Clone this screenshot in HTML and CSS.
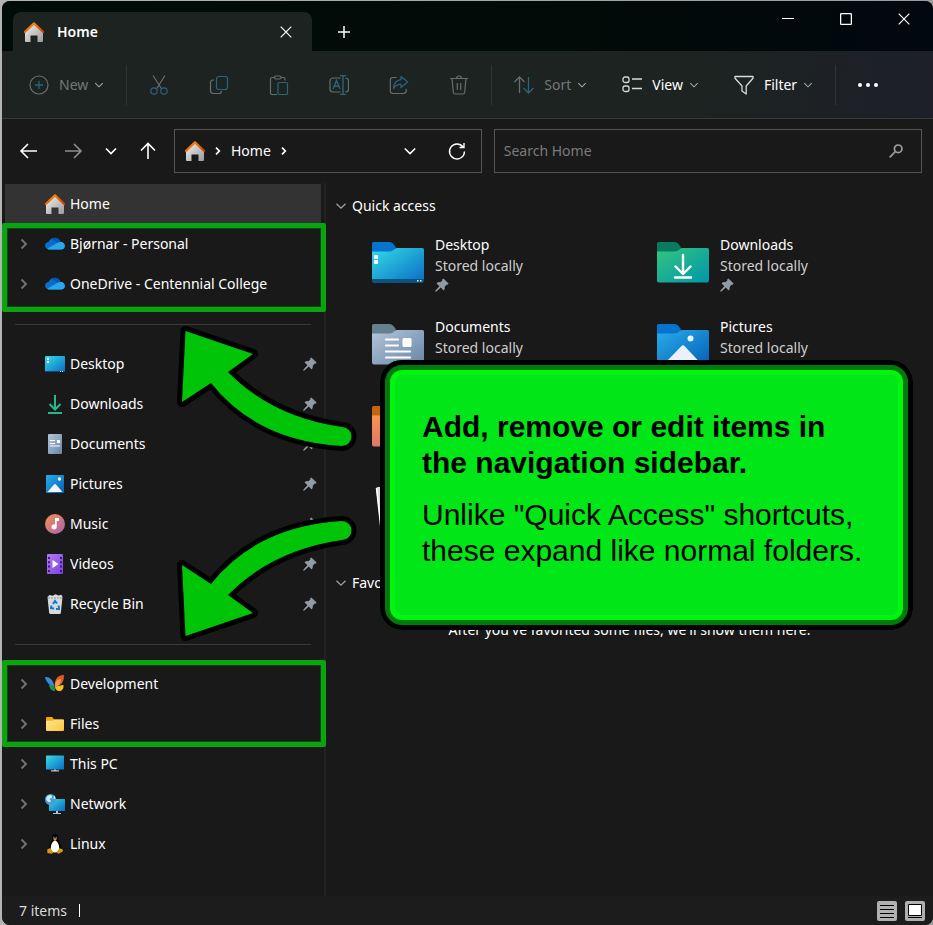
FILE: index.html
```html
<!DOCTYPE html>
<html lang="en">
<head>
<meta charset="utf-8">
<meta name="viewport" content="width=device-width, initial-scale=1">
<title>Home</title>
<link rel="stylesheet" href="styles.css">
</head>
<body>
<svg class="sprite" aria-hidden="true">
  <defs>
    <linearGradient id="g-roof" x1="0" y1="0" x2="1" y2="1"><stop offset="0" stop-color="#fb9a10"/><stop offset="1" stop-color="#d83b01"/></linearGradient>
    <linearGradient id="g-wall" x1="0" y1="0" x2="1" y2="1"><stop offset="0" stop-color="#f2f2f2"/><stop offset="1" stop-color="#9a9a9a"/></linearGradient>
    <linearGradient id="g-cyan" x1="0" y1="0" x2="1" y2="1"><stop offset="0" stop-color="#35dbe6"/><stop offset="1" stop-color="#0a6cc4"/></linearGradient>
    <linearGradient id="g-blue" x1="0" y1="0" x2="1" y2="1"><stop offset="0" stop-color="#28aeea"/><stop offset="1" stop-color="#0560b6"/></linearGradient>
    <linearGradient id="g-green" x1="0" y1="0" x2="1" y2="1"><stop offset="0" stop-color="#33c481"/><stop offset="1" stop-color="#0097a8"/></linearGradient>
    <linearGradient id="g-slate" x1="0" y1="0" x2="1" y2="1"><stop offset="0" stop-color="#b4c5da"/><stop offset="1" stop-color="#6786a8"/></linearGradient>
    <linearGradient id="g-music" x1="0" y1="0" x2="1" y2="1"><stop offset="0" stop-color="#f5924f"/><stop offset="1" stop-color="#a95fb0"/></linearGradient>
    <linearGradient id="g-orange" x1="0" y1="0" x2="0" y2="1"><stop offset="0" stop-color="#fd9650"/><stop offset="1" stop-color="#dd7866"/></linearGradient>
    <linearGradient id="g-video" x1="0" y1="0" x2="1" y2="1"><stop offset="0" stop-color="#b37cf0"/><stop offset="1" stop-color="#7a3fe0"/></linearGradient>
    <linearGradient id="g-yellow" x1="0" y1="0" x2="1" y2="1"><stop offset="0" stop-color="#ffe69a"/><stop offset="1" stop-color="#fdc534"/></linearGradient>
  </defs>
  <symbol id="i-home" viewBox="0 0 20 20"><path d="M1 9.500 10 1.500l9 8V19a1 1 0 0 1-1 1h-4.500v-6.500h-7V20H2a1 1 0 0 1-1-1z" fill="url(#g-wall)"/><path d="M.8 10 10 1.400 19.200 10" fill="none" stroke="url(#g-roof)" stroke-width="2.200" stroke-linecap="round" stroke-linejoin="round"/></symbol>
  <symbol id="i-cloud" viewBox="0 0 20 20"><path d="M4.200 15.500C1.500 15.300.1 13.500.1 11.600c0-2 1.600-3.700 3.700-3.900C5 5.200 7.200 3.800 9.800 3.800c2.700 0 5 1.800 5.800 4.200 2.600.2 4.400 1.700 4.400 3.900 0 1.900-1.500 3.600-3.800 3.600z" fill="#0a6ed1"/><path d="M6.500 4.900C8.300 3.500 11.400 3.400 13.400 5c1.100.8 1.900 1.800 2.200 3l-3.400.8z" fill="#0358a7"/><path d="M2 14.700 12.800 8.800c2-1 4.600-1 6 .5 1.800 2.200 1.300 6.200-2.600 6.200h-12c-.9 0-1.600-.3-2.200-.8z" fill="#28a8ea"/></symbol>
  <symbol id="i-desktop" viewBox="0 0 20 20"><rect y="2" width="20" height="16" rx="1" fill="url(#g-cyan)"/><path d="M0 17h20v0a1 1 0 0 1-1 1H1a1 1 0 0 1-1-1z" fill="#084a78"/><path d="M2 4h2v2H2zM2 7h2v2H2zM15 17h1v1h-1zM17 17h1v1h-1z" fill="#fff"/></symbol>
  <symbol id="i-download" viewBox="0 0 20 20"><path d="M10 1v14M4.500 10l5.500 5.500 5.500-5.500M3 19h14" fill="none" stroke="#26b78e" stroke-width="2"/></symbol>
  <symbol id="i-document" viewBox="0 0 20 20"><rect x="3" width="14" height="20" rx="1" fill="url(#g-slate)"/><path d="M5 6.500h5M5 9.500h5M5 12h10" stroke="#fff" stroke-width="1.200"/><path d="M12 6h3v3h-3z" fill="#fff"/></symbol>
  <symbol id="i-picture" viewBox="0 0 20 20"><rect x="1" y="1" width="18" height="18" rx="1" fill="url(#g-blue)"/><path d="m2.500 18 6.500-7.500q1-1 2 0l6.500 7.500z" fill="#f2f7ff"/><circle cx="14.500" cy="5" r="1.700" fill="#fff"/></symbol>
  <symbol id="i-music" viewBox="0 0 20 20"><circle cx="10" cy="10" r="10" fill="url(#g-music)"/><path d="M10 4h4v3h-2.300v5.800a2.600 2.600 0 1 1-1.700-2.400z" fill="#fff"/></symbol>
  <symbol id="i-video" viewBox="0 0 20 20"><rect x="2" width="16" height="20" rx="1" fill="url(#g-video)"/><path d="M4 3v15M16 3v15" stroke="#3b1a78" stroke-width="2" stroke-dasharray="2 2.300"/><path d="m7.500 6 6 4-6 4z" fill="#fff"/></symbol>
  <symbol id="i-bin" viewBox="0 0 20 20"><path d="m2.500 3 2-2 3 .8 3-1.500 3 1.200 3-.8 1 2.300-1.600 15.500q0 1.500-1.500 1.500H5.600q-1.300 0-1.500-1.500z" fill="#d7dadd"/><path d="m3 4 14 0" stroke="#8d9499" stroke-width="1" stroke-dasharray="2 1"/><path d="m8 10 2-3 2 2.500M6.500 11.500 6 14l3 .8M11 15h3l-.3-3.500" fill="none" stroke="#0e78d4" stroke-width="2"/></symbol>
  <symbol id="i-butterfly" viewBox="0 0 20 20"><path d="M0 3c4-.5 8 2 9.500 9.500C4.500 12 .7 7.500 0 3z" fill="#3b8ad8"/><path d="M4 10.500c3 0 5 1.200 5.700 3l.3 3.500c-3 .3-5.700-2-6-6.500z" fill="#1c9150"/><path d="M10 13C9 6 12 1.500 18.700.8 19.500 6 17.500 12 10 13z" fill="#e45527"/><path d="M10 13c-.5-5 2-8 6-8 0 4-2 7-6 8z" fill="#f59b55"/><path d="M10 13c3-1 6-2 8.500-2 .5 4-2 6.500-5 6-1.700-.3-3-1.500-3.500-4z" fill="#f6c417"/></symbol>
  <symbol id="i-folder" viewBox="0 0 20 20"><path d="M1 4.300Q1 3 2.200 3h5l2 2.500H18q1 0 1 1V9H1z" fill="#f5a800"/><path d="M1 6.800h6.500L9.300 5.500H18.200a.8.800 0 0 1 .8.800V16a1 1 0 0 1-1 1H2a1 1 0 0 1-1-1z" fill="url(#g-yellow)"/></symbol>
  <symbol id="i-pc" viewBox="0 0 20 20"><rect x="1" y="1.500" width="18" height="14" rx=".6" fill="url(#g-cyan)"/><path d="M9 15.500h2v1h-2zM6 16.300h8v1.300H6z" fill="#b9c6ce"/></symbol>
  <symbol id="i-network" viewBox="0 0 20 20"><rect x="4" y="5" width="16" height="12" rx=".5" fill="url(#g-cyan)"/><path d="M11 17h2v2h-2zM8 19h8v1H8z" fill="#b9c6ce"/><circle cx="5.500" cy="5.500" r="5.500" fill="#4a9fcc"/><path d="M1.200 4.500C2 2 4 .8 6.500 1.200L7 3.500 4.500 5l1.500 2-1.500 1.200C2.500 8 1.500 6.500 1.200 4.500zM9 1.500a5 5 0 0 1 1.500 3L8.500 5z" fill="#cfeaf5"/></symbol>
  <symbol id="i-linux" viewBox="0 0 20 20"><path d="M10 0c2.300 0 3.200 1.800 3.200 4.300 0 2.500 3.500 5.500 3.300 10.500L10 18.500 4 15c0-5 3-7.500 3-10.200C7 2 7.700 0 10 0z" fill="#020202"/><path d="M10 6.500c2 0 4.200 4 4.200 7.500 0 2.500-1.500 4.500-4.200 4.500S5.800 16.500 5.800 14C5.800 10.500 8 6.500 10 6.500z" fill="#fff"/><path d="M7.800 4.800 10 4l2.300.8L10 7z" fill="#d8990d"/><path d="M8.500 3.300h.8M10.800 3.300h.8" stroke="#fff"/><path d="m2.300 15.500 3-1.500 3 4.200q-.7 2-3 1.200l-3-.5zM17.500 15.300l-3-1-2.700 3.500q0 2 2 2l4.200-2.500z" fill="#d8990d"/></symbol>
  <symbol id="i-pin" viewBox="0 0 14 14"><path d="M8.400.4 13.600 5.600 12.500 6.800 11.400 6.700 9.800 8.700Q10.200 11 8.600 12.400L5.800 9.600 1.400 13.600.3 13.700.4 12.600 4.400 8.200 1.600 5.400Q3 3.800 5.300 4.200L7.300 2.600 7.200 1.500z" fill="#929ba3"/></symbol>
  <symbol id="i-down" viewBox="0 0 12 12"><path d="m1.500 3.800 4.500 4.400 4.500-4.400" fill="none" stroke="currentColor" stroke-width="1.300"/></symbol>
  <symbol id="i-right" viewBox="0 0 12 12"><path d="m3.500 1.500 4.500 4.500-4.500 4.500" fill="none" stroke="currentColor" stroke-width="1.800"/></symbol>
  <symbol id="i-crumb" viewBox="0 0 12 12"><path d="m4 2.700 3.300 3.300L4 9.300" fill="none" stroke="currentColor" stroke-width="1.700"/></symbol>
  <symbol id="i-x" viewBox="0 0 12 12"><path d="m.7.7 10.600 10.600M11.300.7.7 11.300" stroke="currentColor" stroke-width="1.200"/></symbol>

  <symbol id="f-desktop" viewBox="0 0 54 42"><path d="M1 2.500Q1 1 2.500 1h16.300q2 0 3.200 1.500L24.800 6 24 12H1z" fill="#0673cf"/><path d="M1 10.500h17.500q3 0 4.500-1.700l.8-.8q1-1 2.500-1h25.200Q53 7 53 8.500v31q0 2-2 2H3q-2 0-2-2z" fill="url(#g-cyan)"/><path d="M1 38h52v1.500q0 2-2 2H3q-2 0-2-2z" fill="#075482"/><g fill="#fff"><rect x="3" y="14" width="4" height="4" rx="1"/><rect x="3" y="19" width="4" height="4" rx="1"/><path d="M46 39h1.500v1.500H46zM49 39h1.500v1.500H49z"/></g></symbol>
  <symbol id="f-download" viewBox="0 0 54 42"><path d="M1 2.500Q1 1 2.500 1h16.300q2 0 3.200 1.500L24.800 6 24 12H1z" fill="#087a5d"/><path d="M1 10.500h17.500q3 0 4.500-1.700l.8-.8q1-1 2.500-1h25.200Q53 7 53 8.500v31q0 2-2 2H3q-2 0-2-2z" fill="url(#g-green)"/><path d="M27 14v18M19.500 25.500 27 33l7.500-7.500M19 36.500h16" fill="none" stroke="#fff" stroke-width="2.400" stroke-linecap="round" stroke-linejoin="round"/></symbol>
  <symbol id="f-document" viewBox="0 0 54 42"><path d="M1 2.500Q1 1 2.500 1h16.300q2 0 3.200 1.500L24.800 6 24 12H1z" fill="#668090"/><path d="M1 10.500h17.500q3 0 4.500-1.700l.8-.8q1-1 2.500-1h25.200Q53 7 53 8.500v31q0 2-2 2H3q-2 0-2-2z" fill="url(#g-slate)"/><path d="M15 16.500h12M15 22.500h12M15 28.500h24M15 34.500h24" stroke="#fff" stroke-width="2.200" stroke-linecap="round"/><rect x="31.500" y="15" width="9" height="9" rx="1.500" fill="#fff"/></symbol>
  <symbol id="f-picture" viewBox="0 0 54 42"><path d="M1 2.500Q1 1 2.500 1h16.300q2 0 3.200 1.500L24.800 6 24 12H1z" fill="#0673cf"/><path d="M1 10.500h17.500q3 0 4.500-1.700l.8-.8q1-1 2.500-1h25.200Q53 7 53 8.500v31q0 2-2 2H3q-2 0-2-2z" fill="url(#g-blue)"/><path d="m10 39 15.500-16q1.500-1.500 3 0L43.500 39z" fill="#eaf1fc"/><circle cx="34.500" cy="15.500" r="3" fill="#e8f5ff"/></symbol>
  <symbol id="f-music" viewBox="0 0 54 42"><path d="M1 2.500Q1 1 2.500 1h16.300q2 0 3.200 1.500L24.800 6 24 12H1z" fill="#c4650b"/><path d="M1 10.500h17.500q3 0 4.500-1.700l.8-.8q1-1 2.500-1h25.200Q53 7 53 8.500v31q0 2-2 2H3q-2 0-2-2z" fill="url(#g-orange)"/></symbol>
  <symbol id="f-bin" viewBox="0 0 54 42"><path d="m5 1 5-3h34l5 3-5 41H10z" fill="#d9dcdf"/><path d="m5.500 1 4.500 41" stroke="#fff" stroke-width="1.500"/></symbol>
</svg>

<div class="window">
  <header class="titlebar">
    <div class="tab">
      <svg class="icon20"><use href="#i-home"/></svg>
      <span class="tab-title">Home</span>
      <button class="plain" aria-label="Close tab"><svg class="icon12"><use href="#i-x"/></svg></button>
    </div>
    <button class="plain new-tab" aria-label="New tab"><svg class="icon12" viewBox="0 0 12 12"><path d="M6 0v12M0 6h12" stroke="currentColor" stroke-width="1.500"/></svg></button>
    <div class="caption">
      <button class="plain" aria-label="Minimize"><svg class="icon12" viewBox="0 0 12 12"><path d="M0 5.500h12" stroke="currentColor"/></svg></button>
      <button class="plain" aria-label="Maximize"><svg class="icon12" viewBox="0 0 12 12"><rect x=".6" y=".6" width="10.800" height="10.800" rx="1" fill="none" stroke="currentColor" stroke-width="1.300"/></svg></button>
      <button class="plain" aria-label="Close"><svg class="icon12"><use href="#i-x"/></svg></button>
    </div>
  </header>

  <div class="toolbar" role="toolbar" aria-label="Commands">
    <button class="tool dim"><svg class="icon20" viewBox="0 0 20 20"><circle cx="10" cy="10" r="9" fill="none" stroke="#686e6d" stroke-width="1.200"/><path d="M10 6v8M6 10h8" stroke="#2d647d" stroke-width="1.300"/></svg>New<svg class="icon10"><use href="#i-down"/></svg></button>
    <span class="divider"></span>
    <div class="tool-icons">
      <button class="plain" aria-label="Cut"><svg class="icon20" viewBox="0 0 20 20" fill="none" stroke-width="1.200"><path d="m4 .5 8.300 13M16 .5 7.700 13.500" stroke="#686e6d"/><circle cx="5" cy="16" r="3.200" stroke="#2d647d"/><circle cx="15" cy="16" r="3.200" stroke="#2d647d"/></svg></button>
      <button class="plain" aria-label="Copy"><svg class="icon20" viewBox="0 0 20 20" fill="none" stroke-width="1.200"><path d="M5 5H4a2.500 2.500 0 0 0-2.500 2.500v8A3 3 0 0 0 4.500 18.500h5.500a2.500 2.500 0 0 0 2.500-2.500" stroke="#686e6d"/><rect x="7.500" y="1.500" width="11" height="13" rx="2.500" stroke="#2d647d"/></svg></button>
      <button class="plain" aria-label="Paste"><svg class="icon20" viewBox="0 0 20 20" fill="none" stroke-width="1.200"><path d="M5.500 2.500H3A1.500 1.500 0 0 0 1.500 4v14A1.500 1.500 0 0 0 3 19.500h5M12 2.500h2.500A1.500 1.500 0 0 1 16 4v1.500" stroke="#686e6d"/><rect x="5.500" y="1" width="6.500" height="3" rx="1.500" stroke="#686e6d"/><rect x="9" y="7.500" width="9.500" height="12" rx="1.500" stroke="#2d647d"/></svg></button>
      <button class="plain" aria-label="Rename"><svg class="icon20" viewBox="0 0 20 20" fill="none" stroke-width="1.200"><path d="M11.500 3H4a3 3 0 0 0-3 3v8a3 3 0 0 0 3 3h7.500M16.500 3a3 3 0 0 1 3 3v8a3 3 0 0 1-3 3" stroke="#686e6d"/><path d="M11 .6h6M11 19.400h6M14 .6v18.800M4 14l3.500-8.500L11 14M5.200 11.200h4.600" stroke="#2d647d" stroke-width="1.400"/></svg></button>
      <button class="plain" aria-label="Share"><svg class="icon20" viewBox="0 0 20 20" fill="none" stroke-width="1.200"><path d="M7.500 2.500H4A2.700 2.700 0 0 0 1.300 5.200v10.600A2.700 2.700 0 0 0 4 18.500h10.500a2.700 2.700 0 0 0 2.700-2.700V14" stroke="#686e6d"/><path d="M12 1.500 18.700 7 12 12.500V9.300q-5-.3-7.500 4.200Q5 5.500 12 4.700z" stroke="#2d647d" stroke-linejoin="round"/></svg></button>
      <button class="plain" aria-label="Delete"><svg class="icon20" viewBox="0 0 20 20" fill="none" stroke="#686e6d" stroke-width="1.200"><path d="M1 3.500h18M7.500 3.500a2.500 2.500 0 0 1 5 0M3 3.500l1.300 13.700a2 2 0 0 0 2 1.800h7.400a2 2 0 0 0 2-1.800L17 3.500M8.300 8v7M11.700 8v7"/></svg></button>
    </div>
    <span class="divider"></span>
    <div class="tool-menus">
      <button class="tool dim"><svg class="icon20" viewBox="0 0 20 20" fill="none" stroke-width="1.300"><path d="M5.500 18V2M.5 7l5-5 5 5" stroke="#686e6d"/><path d="M14.500 2v16M9.500 13l5 5 5-5" stroke="#2d647d"/></svg>Sort<svg class="icon10"><use href="#i-down"/></svg></button>
      <button class="tool"><svg class="icon20" viewBox="0 0 20 20" fill="none" stroke="#d8dbda" stroke-width="1.300"><rect x="1" y="2" width="6" height="5.500" rx="2"/><rect x="1" y="11" width="6" height="5.500" rx="2"/><path d="M10 4h10M10 13.500h10"/></svg>View<svg class="icon10"><use href="#i-down"/></svg></button>
      <button class="tool"><svg class="icon20" viewBox="0 0 20 20" fill="none" stroke="#d8dbda" stroke-width="1.300" stroke-linejoin="round"><path d="M1 1.500h18v1.700L12.200 11v8L8 16v-5L1 3.200z"/></svg>Filter<svg class="icon10"><use href="#i-down"/></svg></button>
    </div>
    <span class="divider"></span>
    <button class="tool" aria-label="See more"><svg class="icon20" viewBox="0 0 20 20" fill="currentColor"><circle cx="2" cy="10" r="2"/><circle cx="10" cy="10" r="2"/><circle cx="18" cy="10" r="2"/></svg></button>
  </div>

  <nav class="locationbar" aria-label="Location">
    <div class="history">
      <button class="plain" aria-label="Back"><svg class="icon20" viewBox="0 0 20 20"><path d="M18 10H2.500M9 3l-7 7 7 7" fill="none" stroke="currentColor" stroke-width="1.600"/></svg></button>
      <button class="plain faded" aria-label="Forward"><svg class="icon20" viewBox="0 0 20 20"><path d="M2 10h15.500M11 3l7 7-7 7" fill="none" stroke="currentColor" stroke-width="1.600"/></svg></button>
      <button class="plain recent" aria-label="Recent locations"><svg class="icon12" viewBox="0 0 12 12"><path d="m1 3.500 5 5 5-5" fill="none" stroke="currentColor" stroke-width="1.600"/></svg></button>
      <button class="plain up" aria-label="Up"><svg class="icon20" viewBox="0 0 20 20"><path d="M10 18V2.500M3 9.500l7-7 7 7" fill="none" stroke="currentColor" stroke-width="1.600"/></svg></button>
    </div>
    <div class="address">
      <svg class="icon20"><use href="#i-home"/></svg>
      <svg class="icon12"><use href="#i-crumb"/></svg>
      <a href="#">Home</a>
      <svg class="icon12"><use href="#i-crumb"/></svg>
      <button class="plain expand" aria-label="Previous locations"><svg class="icon14"><use href="#i-down"/></svg></button>
      <button class="plain" aria-label="Refresh"><svg class="icon20" viewBox="0 0 20 20" fill="none" stroke="currentColor" stroke-width="1.400"><path d="M16 6A7.500 7.500 0 1 0 17.500 10.500M17 2v4.500h-4.500"/></svg></button>
    </div>
    <div class="search">
      <input type="search" placeholder="Search Home" aria-label="Search Home">
      <svg class="icon14" viewBox="0 0 14 14" fill="none" stroke="#9c9c9c" stroke-width="1.700"><circle cx="9.200" cy="4.800" r="3.800"/><path d="M6.300 7.700.7 13.300"/></svg>
    </div>
  </nav>

  <div class="panes">
    <aside class="sidebar">
      <ul>
        <li><a class="row current" href="#"><svg class="icon12"></svg><svg class="icon20"><use href="#i-home"/></svg>Home</a></li>
      </ul>
      <ul class="marked marked-cloud">
        <li><a class="row" href="#"><svg class="icon12"><use href="#i-right"/></svg><svg class="icon20"><use href="#i-cloud"/></svg>Bjørnar - Personal</a></li>
        <li><a class="row" href="#"><svg class="icon12"><use href="#i-right"/></svg><svg class="icon20"><use href="#i-cloud"/></svg>OneDrive - Centennial College</a></li>
      </ul>
      <hr>
      <ul>
        <li><a class="row" href="#"><svg class="icon12"></svg><svg class="icon20"><use href="#i-desktop"/></svg>Desktop<svg class="icon14 pin"><use href="#i-pin"/></svg></a></li>
        <li><a class="row" href="#"><svg class="icon12"></svg><svg class="icon20"><use href="#i-download"/></svg>Downloads<svg class="icon14 pin"><use href="#i-pin"/></svg></a></li>
        <li><a class="row" href="#"><svg class="icon12"></svg><svg class="icon20"><use href="#i-document"/></svg>Documents<svg class="icon14 pin"><use href="#i-pin"/></svg></a></li>
        <li><a class="row" href="#"><svg class="icon12"></svg><svg class="icon20"><use href="#i-picture"/></svg>Pictures<svg class="icon14 pin"><use href="#i-pin"/></svg></a></li>
        <li><a class="row" href="#"><svg class="icon12"></svg><svg class="icon20"><use href="#i-music"/></svg>Music<svg class="icon14 pin"><use href="#i-pin"/></svg></a></li>
        <li><a class="row" href="#"><svg class="icon12"></svg><svg class="icon20"><use href="#i-video"/></svg>Videos<svg class="icon14 pin"><use href="#i-pin"/></svg></a></li>
        <li><a class="row" href="#"><svg class="icon12"></svg><svg class="icon20"><use href="#i-bin"/></svg>Recycle Bin<svg class="icon14 pin"><use href="#i-pin"/></svg></a></li>
      </ul>
      <hr>
      <ul class="marked marked-folders">
        <li><a class="row" href="#"><svg class="icon12"><use href="#i-right"/></svg><svg class="icon20"><use href="#i-butterfly"/></svg>Development</a></li>
        <li><a class="row" href="#"><svg class="icon12"><use href="#i-right"/></svg><svg class="icon20"><use href="#i-folder"/></svg>Files</a></li>
      </ul>
      <ul>
        <li><a class="row" href="#"><svg class="icon12"><use href="#i-right"/></svg><svg class="icon20"><use href="#i-pc"/></svg>This PC</a></li>
        <li><a class="row" href="#"><svg class="icon12"><use href="#i-right"/></svg><svg class="icon20"><use href="#i-network"/></svg>Network</a></li>
        <li><a class="row" href="#"><svg class="icon12"><use href="#i-right"/></svg><svg class="icon20"><use href="#i-linux"/></svg>Linux</a></li>
      </ul>
    </aside>

    <main class="content">
      <h2><svg class="icon12"><use href="#i-down"/></svg>Quick access</h2>
      <div class="tiles">
        <a class="tile" href="#"><svg class="folder"><use href="#f-desktop"/></svg><span><b>Desktop</b><small>Stored locally</small><svg class="icon14"><use href="#i-pin"/></svg></span></a>
        <a class="tile" href="#"><svg class="folder"><use href="#f-download"/></svg><span><b>Downloads</b><small>Stored locally</small><svg class="icon14"><use href="#i-pin"/></svg></span></a>
        <a class="tile" href="#"><svg class="folder"><use href="#f-document"/></svg><span><b>Documents</b><small>Stored locally</small></span></a>
        <a class="tile" href="#"><svg class="folder"><use href="#f-picture"/></svg><span><b>Pictures</b><small>Stored locally</small></span></a>
        <a class="tile first" href="#" aria-label="Music"><svg class="folder"><use href="#f-music"/></svg></a>
        <a class="tile first" href="#" aria-label="Recycle Bin"><svg class="folder"><use href="#f-bin"/></svg></a>
      </div>
      <h2><svg class="icon12"><use href="#i-down"/></svg>Favorites</h2>
      <p class="empty">After you've favorited some files, we'll show them here.</p>
    </main>
  </div>

  <footer class="statusbar">
    <span class="count">7 items</span>
    <div class="view-switch">
      <button class="view-button" aria-label="Details"><svg class="icon20" viewBox="0 0 20 20"><path d="M3 4.500h14M3 8.500h14M3 12.500h14M3 16.500h14" stroke="#000"/></svg></button>
      <button class="view-button" aria-label="Large icons"><svg class="icon20" viewBox="0 0 20 20"><path d="M3.500 3.500h13v11h-13z" fill="#fff" stroke="#000"/><path d="M3 16.500h14" stroke="#000"/></svg></button>
    </div>
  </footer>
</div>

<svg class="arrows" viewBox="0 0 190 330" aria-hidden="true">
  <g fill="#00c408" stroke="#000" stroke-width="10" stroke-linejoin="round" paint-order="stroke">
    <path id="arrow" d="M15.500 13 83 36 58 54Q102 99 172 109A9.500 9.500 0 0 1 172 128Q87 123 41 65L12 84z"/>
    <use href="#arrow" transform="matrix(1 0 0 -1 0 331)"/>
  </g>
</svg>
<section class="callout">
  <h1>Add, remove or edit items in the navigation sidebar.</h1>
  <p>Unlike "Quick Access" shortcuts, these expand like normal folders.</p>
</section>
</body>
</html>
```
FILE: styles.css
```css
* {
  box-sizing: border-box;
}

body {
  position: relative;
  min-height: 100vh;
  margin: 0;
  padding: 1px 0 0 2px;
  background: linear-gradient(90deg, #b4b4b4, #9b9a9c);
  color: #fff;
  font: 14px/20px "Noto Sans", "Open Sans", sans-serif;
}

ul {
  margin: 0;
  padding: 0;
  list-style: none;
}

a {
  color: inherit;
  text-decoration: none;
}

button,
input {
  padding: 0;
  border: 0;
  background: none;
  color: inherit;
  font: inherit;
}

svg {
  display: block;
  flex: none;
}

.sprite {
  position: absolute;
  width: 0;
  height: 0;
}

.icon10 { width: 10px; height: 10px; }
.icon12 { width: 12px; height: 12px; }
.icon14 { width: 14px; height: 14px; }
.icon20 { width: 20px; height: 20px; }

.plain {
  display: flex;
  align-items: center;
  justify-content: center;
  width: 40px;
  height: 40px;
}

.window {
  display: flex;
  flex-direction: column;
  min-height: calc(100vh - 1px);
  border-radius: 8px;
  overflow: hidden;
  background: #191919;
}

/* Title bar */
.titlebar {
  display: flex;
  height: 50px;
  padding-left: 11px;
  background: linear-gradient(90deg, #010b07 60%, #02080f);
}

.tab {
  display: flex;
  align-items: center;
  width: 299px;
  margin-top: 11px;
  padding: 0 6px 0 11px;
  border-radius: 8px 8px 0 0;
  background: #1c2321;
}

.tab-title {
  flex: 1;
  padding-left: 13px;
  font-weight: 600;
}

.new-tab {
  margin: 11px 0 0 12px;
}

.caption {
  display: flex;
  margin-left: auto;
}

.caption .plain {
  width: 58px;
  height: 36px;
}

/* Command bar */
.toolbar {
  display: flex;
  align-items: center;
  gap: 12px;
  height: 68px;
  padding-left: 17px;
  border-bottom: 1px solid #373a39;
  background: linear-gradient(100deg, #1c2321 75%, #1e1f28);
}

.tool {
  display: flex;
  align-items: center;
  gap: 10px;
  height: 40px;
  padding: 0 10px;
}

.tool .icon10 {
  margin-left: -4px;
  color: #a5a9a8;
}

.dim {
  color: #737877;
}

.divider {
  width: 1px;
  height: 40px;
  background: #313635;
}

.tool-icons {
  display: flex;
  gap: 20px;
}

.tool-menus {
  display: flex;
  gap: 15px;
}

/* Location bar */
.locationbar {
  display: flex;
  align-items: center;
  height: 64px;
  padding-right: 11px;
}

.history {
  display: flex;
  padding-left: 5px;
}

.history .plain {
  width: 44px;
}

.history .recent {
  width: 32px;
}

.history .up {
  width: 42px;
}

.faded {
  color: #8f8f8f;
}

.address,
.search {
  display: flex;
  align-items: center;
  height: 44px;
  border: 1px solid #535353;
}

.address {
  flex: 19;
  gap: 7px;
  margin: 0 12px 0 5px;
  padding: 0 4px 0 10px;
}

.expand {
  margin-left: auto;
}

.search {
  flex: 26;
  padding: 0 18px 0 9px;
}

.search input {
  flex: 1;
  min-width: 0;
  outline: 0;
}

.search input::placeholder {
  color: #7b7b7b;
  opacity: 1;
}

/* Panes */
.panes {
  display: flex;
  flex: 1;
}

.sidebar {
  flex: none;
  width: 324px;
  padding: 1px 3px 0;
  border-right: 2px solid #222;
}

.row {
  display: flex;
  align-items: center;
  height: 40px;
  padding: 0 4px 0 13px;
  line-height: 22px;
}

.row .icon12 {
  color: #757575;
}

.row .icon20 {
  margin: 0 5px 0 15px;
}

.current {
  background: #333;
}

.pin {
  margin-left: auto;
}

.sidebar hr {
  height: 1px;
  margin: 20px 10px 19px;
  border: 0;
  background: #3a3a3a;
}

.marked {
  position: relative;
}

.marked::after {
  content: "";
  position: absolute;
  right: -5px;
  left: -3px;
  border: 5px solid #0ba411;
  border-radius: 2px;
  box-shadow: inset 0 0 0 1px #0a4a0c;
  pointer-events: none;
}

.marked-cloud::after {
  top: -1px;
  bottom: -8px;
}

.marked-folders::after {
  top: -4px;
  bottom: -3px;
}

.content {
  flex: 1;
  min-width: 0;
  padding: 13px 0 0 9px;
}

.content h2 {
  display: flex;
  align-items: center;
  gap: 5px;
  margin: 0;
  font: inherit;
}

.content h2 .icon12 {
  color: #a0a0a0;
}

.tiles {
  display: grid;
  grid-template-columns: 1fr 1fr;
  grid-auto-rows: 82px;
  column-gap: 8px;
  margin: 18px 0 11px 36px;
}

.tile {
  display: flex;
  gap: 10px;
}

.tile.first {
  grid-column: 1;
}

.tile b,
.tile small {
  display: block;
  font: inherit;
  line-height: 21px;
}

.tile small {
  color: #cfcfcf;
}

.tile .icon14 {
  margin-top: 2px;
}

.folder {
  width: 54px;
  height: 42px;
  margin-top: 7px;
}

.empty {
  margin: 27px 0 0 -9px;
  text-align: center;
}

/* Status bar */
.statusbar {
  display: flex;
  align-items: center;
  justify-content: space-between;
  height: 29px;
  padding: 0 8px 0 17px;
  background: #1c1c1c;
}

.count {
  padding-right: 12px;
  border-right: 1px solid #fff;
  color: #dadada;
  line-height: 13px;
}

.view-switch {
  display: flex;
  gap: 8px;
}

.view-button {
  border-radius: 2px;
  background: #b0b0b0;
}

/* Annotation layer */
.arrows {
  position: absolute;
  top: 318px;
  left: 170px;
  width: 190px;
  height: 330px;
  overflow: visible;
}

.callout {
  position: absolute;
  top: 360px;
  right: 20px;
  width: 533px;
  height: 270px;
  padding: 39px 32px;
  border: 10px solid #007a0a;
  border-radius: 22px;
  background: #00e617;
  box-shadow: inset 0 0 0 5px #00f50f;
  outline: 5px solid #000;
  outline-offset: -5px;
  color: #000;
  font: 30px/36px "Liberation Sans", Arial, sans-serif;
}

.callout h1 {
  margin: 0 0 16px;
  font-size: 30px;
}

.callout p {
  margin: 0;
}
```
